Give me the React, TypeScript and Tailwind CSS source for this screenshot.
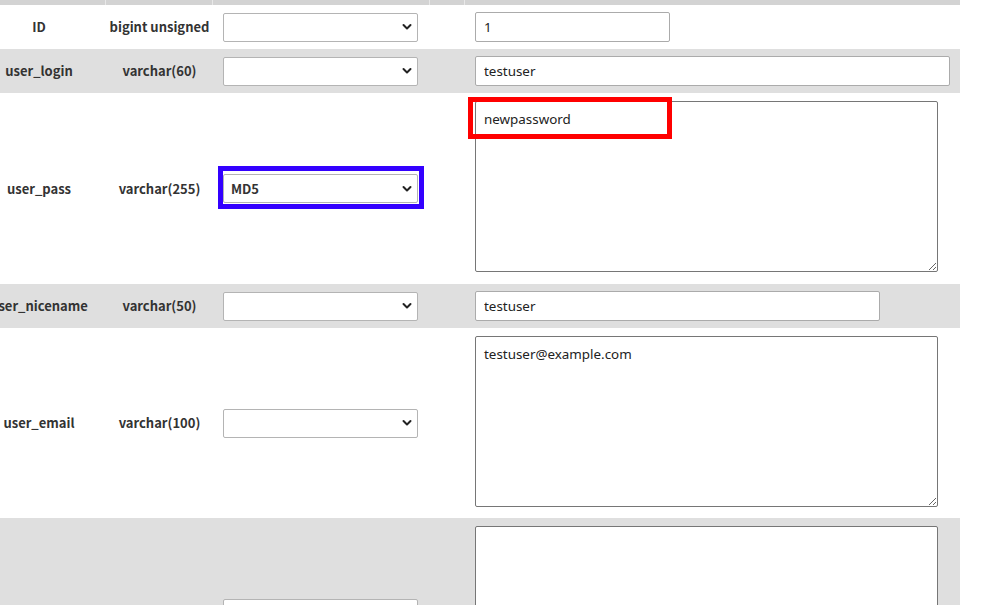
import React from 'react';

type Row = {
    name: string;
    type: string;
    fn?: string;
    value: string;
    kind: 'input' | 'textarea';
    inputWidth?: string;
    height: string;
    shade: boolean;
    markFn?: boolean;
    markValue?: boolean;
};

const ROWS: Row[] = [
    { name: 'ID', type: 'bigint unsigned', value: '1', kind: 'input', inputWidth: 'w-[195px]', height: 'h-[44px]', shade: false },
    { name: 'user_login', type: 'varchar(60)', value: 'testuser', kind: 'input', inputWidth: 'w-[475px]', height: 'h-[44px]', shade: true },
    { name: 'user_pass', type: 'varchar(255)', fn: 'MD5', value: 'newpassword', kind: 'textarea', height: 'h-[191px]', shade: false, markFn: true, markValue: true },
    { name: 'user_nicename', type: 'varchar(50)', value: 'testuser', kind: 'input', inputWidth: 'w-[405px]', height: 'h-[44px]', shade: true },
    { name: 'user_email', type: 'varchar(100)', value: 'testuser@example.com', kind: 'textarea', height: 'h-[190px]', shade: false },
    { name: 'user_url', type: 'varchar(100)', value: '', kind: 'textarea', height: 'h-[190px]', shade: true },
];

const Chevron = () => (
    <svg width="10" height="7" viewBox="0 0 10 7" className="absolute right-[6px] top-1/2 -translate-y-1/2 pointer-events-none">
        <path d="M1.5 1.5 L5 5 L8.5 1.5" fill="none" stroke="#222" strokeWidth="2" strokeLinecap="round" strokeLinejoin="round" />
    </svg>
);

const FnSelect = ({ value, marked }: { value?: string; marked?: boolean }) => (
    <div className="relative w-[195px] h-[29px]">
        <select
            defaultValue={value || ''}
            className="appearance-none w-full h-full bg-white border border-[#b4b4b4] rounded-[2px] pl-[7px] text-[13px] font-bold text-[#333] outline-none [font-family:'Noto_Sans_CJK_JP','Noto_Sans',sans-serif]"
        >
            <option value=""></option>
            <option value="MD5">MD5</option>
        </select>
        <Chevron />
        {marked && <span className="absolute -left-[5px] -right-[6px] -top-[8px] -bottom-[6px] border-[5px] border-[#3300ff] pointer-events-none" />}
    </div>
);

export default function App() {
    return (
        <div className="w-[981px] h-[605px] overflow-hidden bg-white [font-family:'Noto_Sans_CJK_JP','Noto_Sans',sans-serif]">
            <div className="-ml-[28px] w-[988px]">
                {/* header strip (scrolled off) */}
                <div className="grid grid-cols-[134px_107px_217px_35px_495px] h-[5px]">
                    <div className="bg-[#d3d3d3] border-r border-[#e8e8e8]" />
                    <div className="bg-[#d3d3d3] border-r border-[#e8e8e8]" />
                    <div className="bg-[#d3d3d3] border-r border-[#e8e8e8]" />
                    <div className="bg-[#d3d3d3] border-r border-[#e8e8e8]" />
                    <div className="bg-[#d3d3d3]" />
                </div>

                {ROWS.map(r => (
                    <div
                        key={r.name}
                        className={`grid grid-cols-[134px_107px_217px_35px_495px] ${r.height} ${r.shade ? 'bg-[#dfdfdf]' : 'bg-white'}`}
                    >
                        <div className="flex items-center justify-center text-[13px] font-bold text-[#333] whitespace-nowrap">{r.name}</div>
                        <div className="flex items-center justify-center text-[13px] font-bold text-[#333] whitespace-nowrap">{r.type}</div>
                        <div className="flex items-center pl-[10px]">
                            <FnSelect value={r.fn} marked={r.markFn} />
                        </div>
                        <div />
                        <div className={`flex ${r.kind === 'input' ? 'items-center' : 'items-start pt-[8px]'} pl-[10px]`}>
                            {r.kind === 'input' ? (
                                <input
                                    defaultValue={r.value}
                                    className={`${r.inputWidth} h-[30px] bg-white border border-[#ababab] rounded-[2px] px-[8px] text-[13.4px] text-[#222] outline-none [font-family:'Noto_Sans',sans-serif]`}
                                />
                            ) : (
                                <div className="relative">
                                    <textarea
                                        defaultValue={r.value}
                                        className="block w-[463px] h-[171px] bg-white border border-[#767676] rounded-[2px] px-[8px] pt-[7px] pb-[6px] text-[13.4px] text-[#222] outline-none resize [font-family:'Noto_Sans',sans-serif]"
                                    />
                                    {r.markValue && <span className="absolute -left-[7px] -top-[4px] w-[204px] h-[42px] border-[5px] border-[#ff0000] pointer-events-none" />}
                                </div>
                            )}
                        </div>
                    </div>
                ))}
            </div>
        </div>
    );
}
